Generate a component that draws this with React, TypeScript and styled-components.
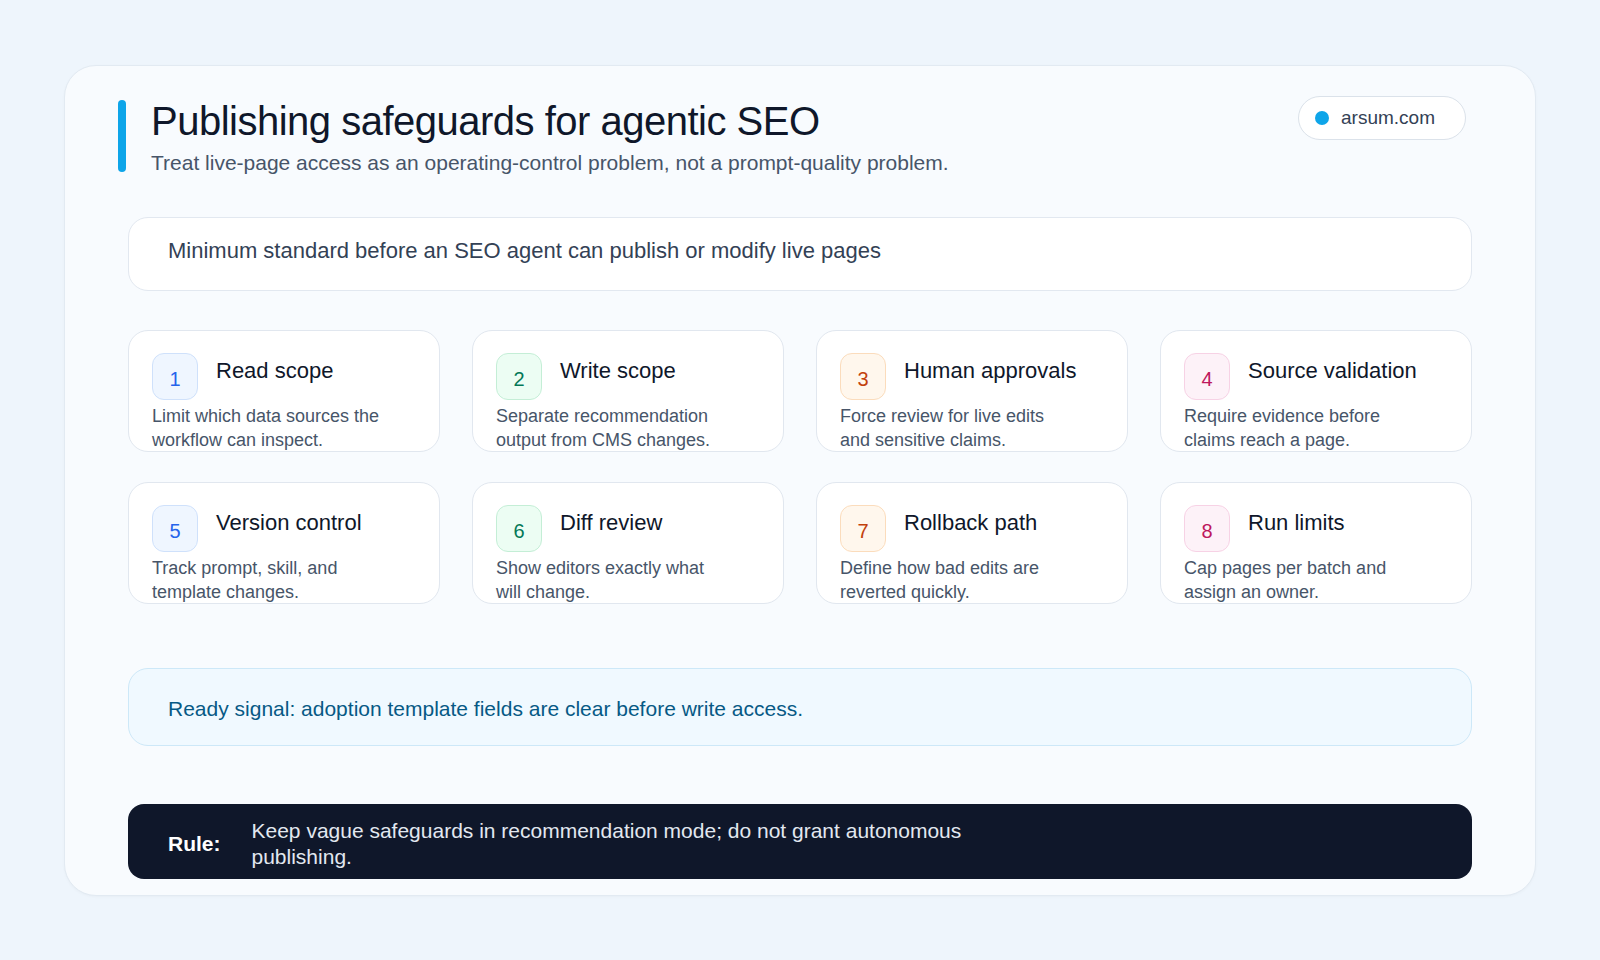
import React, { FC } from "react";
import styled, { createGlobalStyle } from "styled-components";

type Tone = "blue" | "green" | "orange" | "pink";

type Safeguard = {
  num: number;
  title: string;
  text: string;
  tone: Tone;
};

const tones: Record<Tone, { bg: string; border: string; color: string }> = {
  blue: { bg: "#eff6ff", border: "#cfe1fb", color: "#2563eb" },
  green: { bg: "#ecfdf3", border: "#c4eed6", color: "#047857" },
  orange: { bg: "#fff7ed", border: "#fbdcbc", color: "#c2410c" },
  pink: { bg: "#fdf2f8", border: "#f7d2e5", color: "#be185d" },
};

const safeguards: Safeguard[] = [
  { num: 1, title: "Read scope", text: "Limit which data sources the workflow can inspect.", tone: "blue" },
  { num: 2, title: "Write scope", text: "Separate recommendation output from CMS changes.", tone: "green" },
  { num: 3, title: "Human approvals", text: "Force review for live edits and sensitive claims.", tone: "orange" },
  { num: 4, title: "Source validation", text: "Require evidence before claims reach a page.", tone: "pink" },
  { num: 5, title: "Version control", text: "Track prompt, skill, and template changes.", tone: "blue" },
  { num: 6, title: "Diff review", text: "Show editors exactly what will change.", tone: "green" },
  { num: 7, title: "Rollback path", text: "Define how bad edits are reverted quickly.", tone: "orange" },
  { num: 8, title: "Run limits", text: "Cap pages per batch and assign an owner.", tone: "pink" },
];

const App: FC = () => {
  return (
    <>
      <GlobalStyle />
      <Page>
        <Panel>
          <Header>
            <TitleBlock>
              <AccentBar />
              <div>
                <Title>Publishing safeguards for agentic SEO</Title>
                <Subtitle>
                  Treat live-page access as an operating-control problem, not a
                  prompt-quality problem.
                </Subtitle>
              </div>
            </TitleBlock>
            <DomainPill>
              <Dot />
              arsum.com
            </DomainPill>
          </Header>

          <StandardBox>
            Minimum standard before an SEO agent can publish or modify live pages
          </StandardBox>

          <CardGrid>
            {safeguards.map((s) => (
              <Card key={s.num}>
                <CardHead>
                  <NumBadge $tone={s.tone}>{s.num}</NumBadge>
                  <CardTitle>{s.title}</CardTitle>
                </CardHead>
                <CardText>{s.text}</CardText>
              </Card>
            ))}
          </CardGrid>

          <ReadyBox>
            Ready signal: adoption template fields are clear before write access.
          </ReadyBox>

          <RuleBar>
            <RuleLabel>Rule:</RuleLabel>
            <RuleText>
              Keep vague safeguards in recommendation mode; do not grant
              autonomous publishing.
            </RuleText>
          </RuleBar>
        </Panel>
      </Page>
    </>
  );
};

export default App;

const GlobalStyle = createGlobalStyle`
  * {
    box-sizing: border-box;
  }
  body {
    margin: 0;
    background: #eef5fc;
    font-family: "Liberation Sans", Arial, Helvetica, sans-serif;
    color: #0f172a;
  }
`;

const Page = styled.div`
  min-height: 960px;
  padding: 65px 64px 0 64px;
`;

const Panel = styled.div`
  background: #f8fbfe;
  border: 1px solid #e2eaf2;
  border-radius: 32px;
  padding: 30px 63px 16px 63px;
  box-shadow: 0 1px 3px rgba(15, 23, 42, 0.03);
`;

const Header = styled.div`
  display: flex;
  justify-content: space-between;
  align-items: flex-start;
  margin: 0 6px 0 -10px;
`;

const TitleBlock = styled.div`
  display: flex;
  align-items: flex-start;
  gap: 25px;
  margin-top: 3px;
`;

const AccentBar = styled.div`
  width: 8px;
  height: 72px;
  margin-top: 1px;
  border-radius: 4px;
  background: #0ea5e9;
  flex-shrink: 0;
`;

const Title = styled.h1`
  margin: 0;
  font-size: 40px;
  line-height: 44px;
  font-weight: 400;
  letter-spacing: -0.5px;
  color: #0f172a;
`;

const Subtitle = styled.p`
  margin: 8px 0 0 0;
  font-size: 21px;
  line-height: 24px;
  color: #475569;
`;

const DomainPill = styled.div`
  display: flex;
  align-items: center;
  gap: 12px;
  width: 168px;
  height: 44px;
  padding-left: 16px;
  border: 1px solid #dbe2ea;
  border-radius: 22px;
  background: #ffffff;
  font-size: 19px;
  color: #334155;
`;

const Dot = styled.span`
  width: 14px;
  height: 14px;
  border-radius: 50%;
  background: #0ea5e9;
`;

const StandardBox = styled.div`
  margin-top: 42px;
  padding: 20px 39px 26px;
  background: #ffffff;
  border: 1px solid #e2e8f0;
  border-radius: 20px;
  font-size: 22px;
  line-height: 26px;
  color: #334155;
`;

const CardGrid = styled.div`
  margin-top: 39px;
  display: grid;
  grid-template-columns: repeat(4, 1fr);
  column-gap: 32px;
  row-gap: 30px;
`;

const Card = styled.div`
  height: 122px;
  overflow: hidden;
  padding: 22px 23px 0;
  background: #ffffff;
  border: 1.5px solid #e1e7ef;
  border-radius: 20px;
`;

const CardHead = styled.div`
  display: flex;
  align-items: flex-start;
  gap: 18px;
`;

const NumBadge = styled.div<{ $tone: Tone }>`
  width: 46px;
  height: 47px;
  flex-shrink: 0;
  display: flex;
  align-items: center;
  justify-content: center;
  padding-top: 5px;
  border-radius: 12px;
  background: ${(p) => tones[p.$tone].bg};
  border: 1px solid ${(p) => tones[p.$tone].border};
  color: ${(p) => tones[p.$tone].color};
  font-size: 20px;
  line-height: 20px;
`;

const CardTitle = styled.div`
  padding-top: 5px;
  font-size: 22px;
  line-height: 26px;
  color: #0f172a;
`;

const CardText = styled.p`
  margin: 4px 0 0 0;
  max-width: 234px;
  font-size: 18px;
  line-height: 24px;
  color: #475569;
`;

const ReadyBox = styled.div`
  margin-top: 64px;
  padding: 27px 39px 23px;
  background: #f0f9ff;
  border: 1px solid #cde8f8;
  border-radius: 20px;
  font-size: 21px;
  line-height: 26px;
  color: #075985;
`;

const RuleBar = styled.div`
  margin-top: 58px;
  display: flex;
  align-items: center;
  gap: 31px;
  padding: 14px 40px 9px;
  background: #0f172a;
  border-radius: 16px;
`;

const RuleLabel = styled.div`
  font-size: 21px;
  line-height: 26px;
  font-weight: 600;
  color: #ffffff;
`;

const RuleText = styled.div`
  max-width: 760px;
  font-size: 21px;
  line-height: 26px;
  color: #e2e8f0;
`;
